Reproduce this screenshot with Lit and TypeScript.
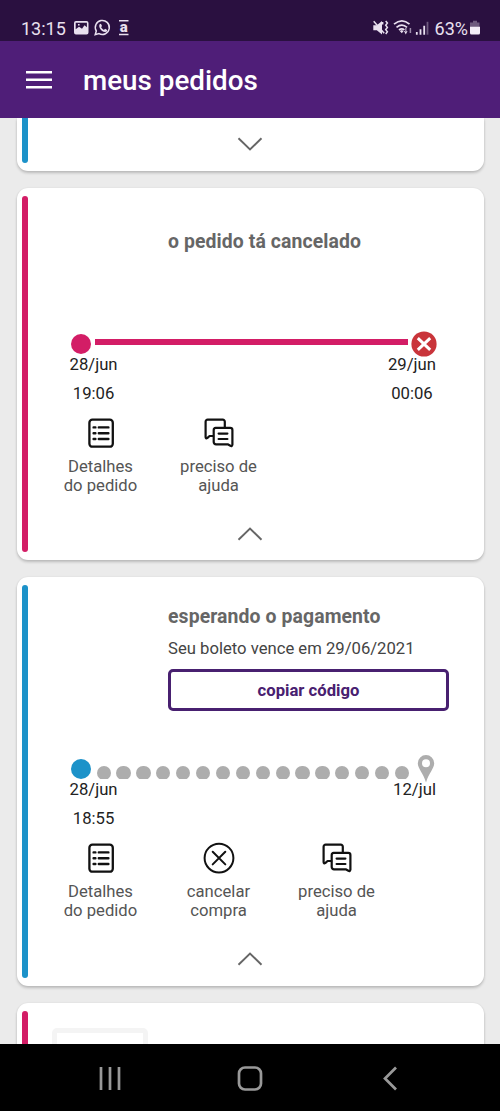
import { LitElement, html, svg, css, nothing } from "lit";
import { customElement, property } from "lit/decorators.js";

type Action = { icon: string; lines: [string, string] };
type Order = {
  tone: "pink" | "blue";
  status: string;
  note?: string;
  button?: string;
  start: [string, string];
  end: [string, string?];
  actions: Action[];
};

const details: Action = { icon: "list", lines: ["Detalhes", "do pedido"] };
const help: Action = { icon: "chat", lines: ["preciso de", "ajuda"] };
const cancel: Action = { icon: "cancel", lines: ["cancelar", "compra"] };

const orders: Order[] = [
  {
    tone: "pink",
    status: "o pedido tá cancelado",
    start: ["28/jun", "19:06"],
    end: ["29/jun", "00:06"],
    actions: [details, help],
  },
  {
    tone: "blue",
    status: "esperando o pagamento",
    note: "Seu boleto vence em 29/06/2021",
    button: "copiar código",
    start: ["28/jun", "18:55"],
    end: ["12/jul"],
    actions: [details, cancel, help],
  },
];

const actionIcons: Record<string, unknown> = {
  list: svg`<rect x="4.400" y="2.700" width="23.400" height="27" rx="3" stroke-width="2.300"/>
    <path d="M8.600 10.400h1.800M8.600 16.200h1.800M8.600 22h1.800M13.800 10.400h9.600M13.800 16.200h9.600M13.800 22h9.600" stroke-width="2.400"/>`,
  chat: svg`<path d="M21.800 10V4.700a2 2 0 0 0-2-2H4.600a2 2 0 0 0-2 2V20.200q.2 1.600 1.600.9L6.600 19H10.200" stroke-width="2.200"/>
    <path d="M12.700 10.900H27.200a2.200 2.200 0 0 1 2.200 2.200V27.700q-.3 2-2 1.100L24.700 27.300H13a2.300 2.300 0 0 1-2.300-2.300V13a2.200 2.200 0 0 1 2-2.100ZM15.600 16.600h8.800M15.600 22h8.800" stroke-width="2.200"/>`,
  cancel: svg`<circle cx="16" cy="16.100" r="14.400" stroke-width="2"/>
    <path d="m9.700 9.800 12.600 12.600M22.300 9.800 9.700 22.400" stroke-width="2"/>`,
};

const chevron = (up: boolean) => html`<svg class="chevron" width="26" height="16" viewBox="0 0 26 16">
  <path d=${up ? "M1.500 13.800 13 2.500l11.500 11.300" : "M1.500 2.200 13 13.500 24.500 2.200"} fill="none" stroke="#666" stroke-width="1.900"/>
</svg>`;

@customElement("order-card")
class OrderCard extends LitElement {
  @property({ attribute: false }) order!: Order;

  static styles = css`
    :host { display: flex; box-sizing: border-box; padding: 8px 5px; background: #fff; border-radius: 11px;
      box-shadow: 0 2px 3px rgba(0, 0, 0, .2), 0 0 2px rgba(0, 0, 0, .08); }
    .stripe { width: 6px; border-radius: 3px; flex: none; }
    .pink { background: #d31d66; }
    .blue { background: #1c92c9; }
    .body { flex: 1; min-width: 0; display: flex; flex-direction: column; }
    .head { height: 133px; box-sizing: border-box; padding: 34px 30px 0 140px; }
    .head.full { height: 169px; padding-top: 20px; }
    .status { font-size: 19.400px; line-height: 24px; font-weight: 700; letter-spacing: .1px; color: #666; white-space: nowrap; }
    .note { font-size: 16.670px; line-height: 20px; color: #444; margin-top: 10px; white-space: nowrap; }
    .copy { display: block; width: 281px; height: 42px; margin: 10px 0 0; padding: 1px 0 0; background: #fff; border: 3px solid #482070;
      border-radius: 5px; font: 700 16.670px Roboto, sans-serif; color: #482070; }
    .track { display: flex; align-items: center; height: 26px; padding: 1.500px 42px 0 42.500px; }
    .full + .track { padding-right: 43px; }
    .dot { width: 20px; height: 20px; border-radius: 50%; flex: none; }
    .line { flex: 1; height: 6px; margin: -3px 2.500px 0 4px; }
    .steps { flex: 1; height: 13px; margin: 8px 0 0 6px; overflow: hidden; display: flex; gap: 5.600px; }
    .step { width: 14.300px; height: 14.300px; border-radius: 50%; background: #adadad; flex: none; }
    .end { flex: none; display: block; }
    .dates { display: flex; justify-content: space-between; height: 62px; padding: 0 42.500px 0 41.500px; margin-top: -2px; font-size: 16.700px; line-height: 20px; color: #222; }
    .date { display: flex; flex-direction: column; gap: 9px; align-items: center; }
    .actions { display: flex; padding-left: 13.500px; }
    .action { width: 118px; text-align: center; font-size: 16.670px; line-height: 19.500px; color: #555; }
    .glyph { display: block; margin: 0 auto 8px; fill: none; stroke: #111; stroke-linejoin: round; stroke-linecap: round; }
    .chevron { display: block; margin: 30px auto 0 209px; }
  `;

  render() {
    const o = this.order;
    const closed = o.tone === "pink";
    return html`
      <div class="stripe ${o.tone}"></div>
      <div class="body">
        <div class="head ${o.note ? "full" : ""}">
          <div class="status">${o.status}</div>
          ${o.note ? html`<div class="note">${o.note}</div>` : nothing}
          ${o.button ? html`<button class="copy">${o.button}</button>` : nothing}
        </div>
        <div class="track">
          <div class="dot ${o.tone}"></div>
          ${closed
            ? html`<div class="line pink"></div>
                <svg class="end" width="26" height="26" viewBox="0 0 26 26">
                  <circle cx="13" cy="13" r="12.600" fill="#c9343a"/>
                  <path d="m6.800 7.200 12.400 11.600M19.200 7.200 6.800 18.800" stroke="#fff" stroke-width="3"/>
                </svg>`
            : html`<div class="steps">${Array.from({ length: 16 }, () => html`<div class="step"></div>`)}</div>
                <svg class="end" width="20" height="28" viewBox="0 0 20 28">
                  <path fill="#adadad" fill-rule="evenodd" d="M10 0a8.200 8.200 0 0 0-8.200 8.200C1.800 13.500 7 17.500 10 27.500 13 17.500 18.200 13.500 18.200 8.200A8.200 8.200 0 0 0 10 0Zm0 4.200a4 4 0 1 1 0 8 4 4 0 0 1 0-8Z"/>
                </svg>`}
        </div>
        <div class="dates">
          <div class="date"><span>${o.start[0]}</span><span>${o.start[1]}</span></div>
          <div class="date"><span>${o.end[0]}</span>${o.end[1] ? html`<span>${o.end[1]}</span>` : nothing}</div>
        </div>
        <div class="actions">
          ${o.actions.map((a) => html`<div class="action">
            <svg class="glyph" width="32" height="32" viewBox="0 0 32 32">${actionIcons[a.icon]}</svg>
            ${a.lines[0]}<br />${a.lines[1]}
          </div>`)}
        </div>
        ${chevron(true)}
      </div>`;
  }
}

@customElement("app-root")
class AppRoot extends LitElement {
  static styles = css`
    :host { display: flex; flex-direction: column; width: 500px; height: 1111px; overflow: hidden; font-family: Roboto, sans-serif; background: #ebebeb; }
    .system { height: 41px; box-sizing: border-box; flex: none; padding: 17px 19px 0 21px; background: #2a1040; color: #e9e0ef;
      display: flex; align-items: flex-start; font-size: 18px; line-height: 23px; }
    .system svg { display: block; flex: none; }
    .clock { width: 52px; }
    .spacer { flex: 1; }
    .percent { margin: 0 1px 0 .5px; }
    .bar { height: 77px; flex: none; background: #4f1e78; display: flex; align-items: center; padding-left: 26px; box-sizing: border-box; gap: 31px; color: #fff;
      font-size: 27.800px; font-weight: 500; }
    .title { padding-top: 2px; }
    .list { flex: 1; min-height: 0; overflow: hidden; display: flex; flex-direction: column; gap: 17px; padding: 0 16.500px 0 17px; }
    .list > * { flex: none; }
    .first { height: 372px; }
    .second { height: 409px; }
    .partial { background: #fff; box-sizing: border-box; display: flex; padding: 0 5px; box-shadow: 0 2px 3px rgba(0, 0, 0, .2), 0 0 2px rgba(0, 0, 0, .08); }
    .previous { height: 53px; border-radius: 0 0 11px 11px; padding-bottom: 8px; }
    .next { height: 80px; border-radius: 11px 11px 0 0; padding-top: 8px; }
    .stripe { width: 6px; }
    .blue { background: #1c92c9; border-radius: 0 0 3px 3px; }
    .pink { background: #d31d66; border-radius: 3px 3px 0 0; }
    .chevron { margin: 18px 0 0 209px; }
    .thumb { width: 96px; height: 80px; box-sizing: border-box; border: 5px solid #f4f4f4; border-radius: 5px; margin: 17px 0 0 24px; }
    .nav { height: 67px; flex: none; background: #000; display: flex; justify-content: space-between; align-items: center; padding: 0 96px; }
  `;

  render() {
    return html`
      <div class="system">
        <span class="clock">13:15</span>
        <svg width="60" height="22" viewBox="73 17 60 22">
          <path fill="#e9e0ef" fill-rule="evenodd" d="M76 21h10.500a2 2 0 0 1 2 2v9.500a2 2 0 0 1-2 2H76a2 2 0 0 1-2-2V23a2 2 0 0 1 2-2Zm-.3 1.700v6.500l3.300-2.500 3 2 2.500-3.500 2.400 2V22.700ZM78 24h1.600v1.600H78Z"/>
          <path fill="none" stroke="#e9e0ef" stroke-width="1.500" d="m95.200 34.700 1.100-3.700a7 7 0 1 1 2.700 2.600Z"/>
          <path fill="#e9e0ef" d="M99.600 24.200q1-.9 1.600.1l.8 1.800-.9 1.200q1 1.900 2.800 2.600l1.200-1.100 2 1.100q.4 1.700-1.900 2.200-3.500-.1-5.500-4-1-2.300-.1-3.900Z"/>
          <path stroke="#e9e0ef" stroke-width="1.500" d="M119 20.700h9.500M119 34.500h9.500"/>
          <text x="123.700" y="32" text-anchor="middle" font-family="Roboto" font-size="15" font-weight="900" fill="#e9e0ef">a</text>
        </svg>
        <span class="spacer"></span>
        <svg width="62" height="22" viewBox="371 17 62 22" fill="none" stroke="#e9e0ef">
          <path fill="#e9e0ef" stroke="none" d="M372.300 25.300h3.500l5.200-4.200v13.300l-5.200-4.200h-3.500Z"/>
          <path stroke-width="1.500" d="m372.700 21.200 10.500 12M384.700 21l1.700 2-1.700 2.200 1.700 2.200-1.700 2.200 1.700 2.200-1.700 2.200"/>
          <path stroke-width="1.400" d="M381.700 22v2.500"/>
          <path stroke-width="1.700" d="M393 24.200q8-6.700 15.500 0M395.500 27.300q5.500-4.500 10.500 0M398 30q2.700-2.200 5.400-.1"/>
          <path fill="#e9e0ef" stroke="none" d="m398.800 31 2-.9 1.800 1-1.800 2.200ZM403 31h3.500l-1.700 3.500Z"/>
          <path stroke="#9c8aa9" stroke-width="1.500" d="M404.800 28v4M409.400 28v5"/>
          <path stroke-width="1.800" d="M415.800 32v2.700M419.500 29.300v5.400M423.200 25.800v8.900"/>
          <path stroke="#6e5a7e" stroke-width="1.800" d="M426.500 21.800v12.900"/>
        </svg>
        <span class="percent">63%</span>
        <svg width="12" height="20" viewBox="0 0 12 20">
          <path fill="#6e5a7e" d="M4 3.800h4v1.600h2.500v5H1v-5h3Z"/>
          <path fill="#f3edf7" d="M1 9.800h10v6.200a1.500 1.500 0 0 1-1.500 1.500h-7A1.500 1.500 0 0 1 1 16Z"/>
        </svg>
      </div>
      <div class="bar">
        <svg width="26" height="20" viewBox="0 0 26 20"><path d="M0 2.200h26M0 9.700h26M0 17.200h26" stroke="#fff" stroke-width="2.600"/></svg>
        <span class="title">meus pedidos</span>
      </div>
      <div class="list">
        <div class="partial previous"><div class="stripe blue"></div>${chevron(false)}</div>
        <order-card class="first" .order=${orders[0]}></order-card>
        <order-card class="second" .order=${orders[1]}></order-card>
        <div class="partial next"><div class="stripe pink"></div><div class="thumb"></div></div>
      </div>
      <div class="nav">
        <svg width="28" height="28" viewBox="0 0 28 28"><path d="M5 3v23M14 3v23M23 3v23" stroke="#999" stroke-width="2.700"/></svg>
        <svg width="28" height="28" viewBox="0 0 28 28"><rect x="3" y="3.500" width="22" height="22" rx="6" fill="none" stroke="#999" stroke-width="2.700"/></svg>
        <svg width="28" height="28" viewBox="0 0 28 28"><path d="M20 3.500 9 14.500l11 11" fill="none" stroke="#999" stroke-width="2.700"/></svg>
      </div>`;
  }
}
